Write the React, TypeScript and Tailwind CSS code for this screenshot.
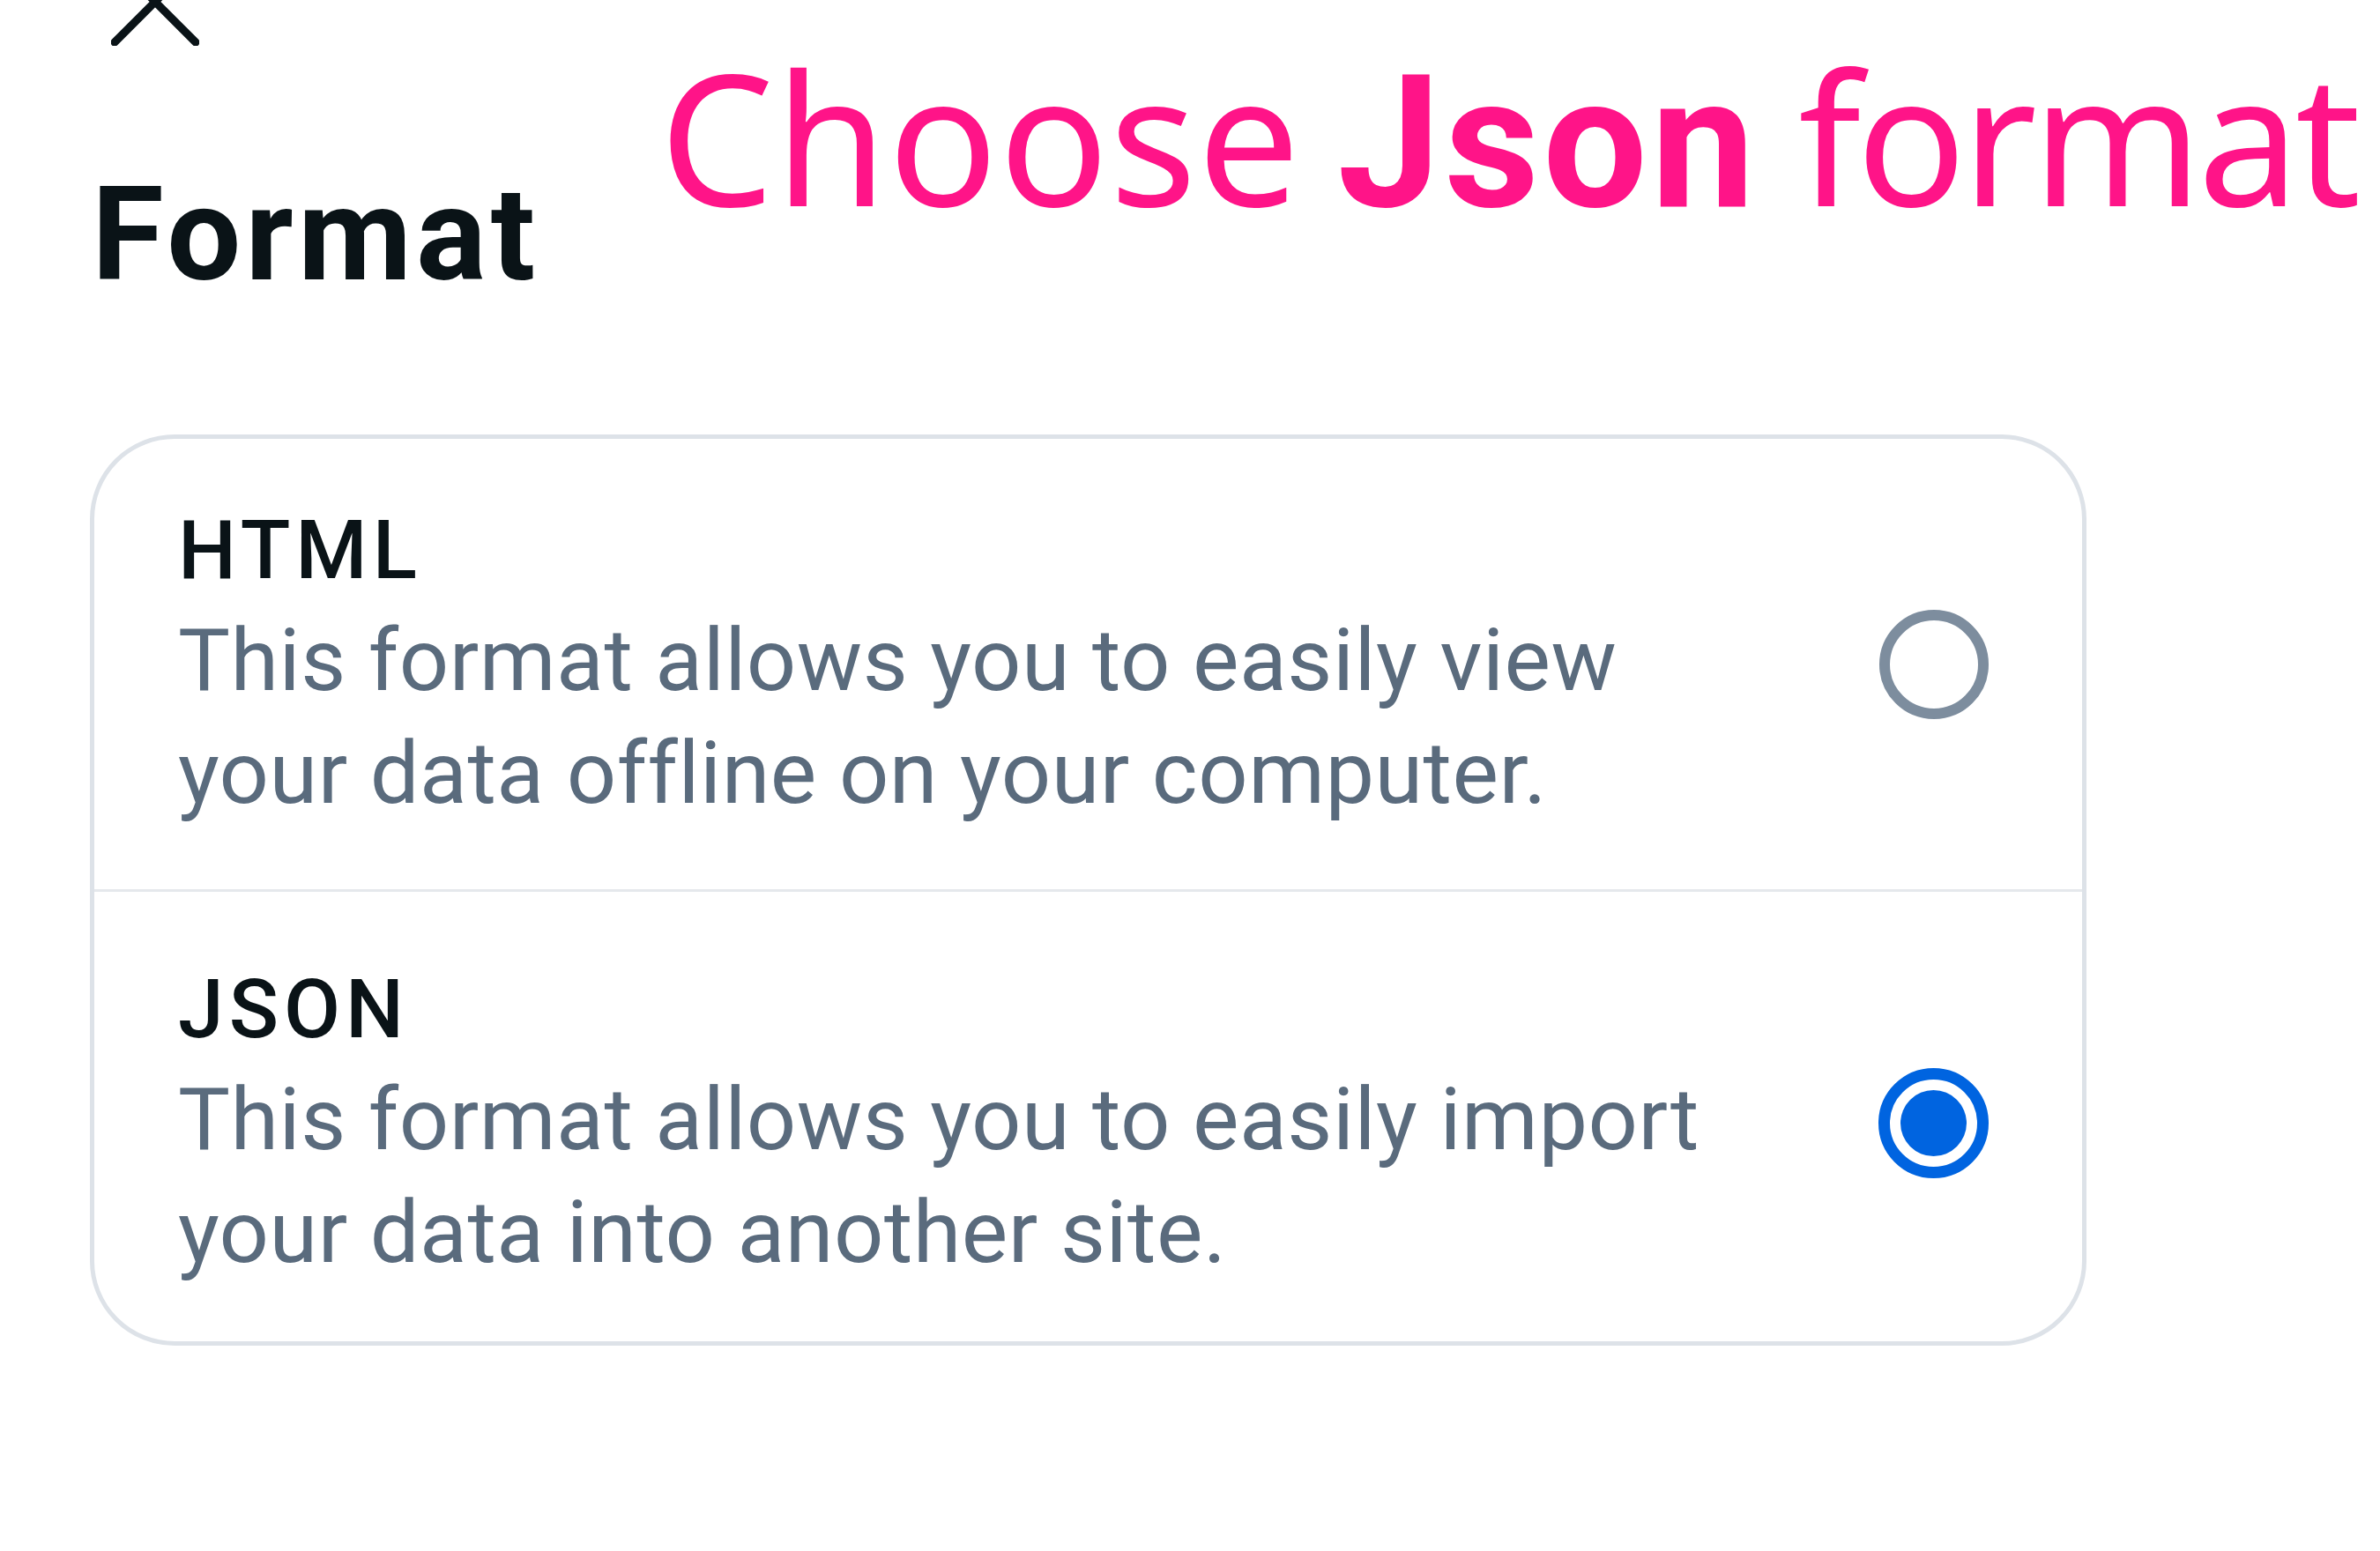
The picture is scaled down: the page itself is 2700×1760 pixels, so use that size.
import React from 'react'

type FormatOption = {
  id: string
  title: string
  lines: string[]
  selected: boolean
}

const OPTIONS: FormatOption[] = [
  {
    id: 'html',
    title: 'HTML',
    lines: ['This format allows you to easily view', 'your data offline on your computer.'],
    selected: false,
  },
  {
    id: 'json',
    title: 'JSON',
    lines: ['This format allows you to easily import', 'your data into another site.'],
    selected: true,
  },
]

function CloseIcon() {
  return (
    <svg
      viewBox="0 0 100 100"
      className="ml-[126px] -mt-[48px] h-[100px] w-[100px] shrink-0"
      fill="none"
      stroke="#0a1317"
      strokeWidth={9}
      strokeLinecap="round"
      aria-hidden
    >
      <path d="M4 4 L96 96" />
      <path d="M96 4 L4 96" />
    </svg>
  )
}

function Radio({ selected }: { selected: boolean }) {
  if (selected) {
    return (
      <div className="flex h-[125px] w-[125px] shrink-0 items-center justify-center rounded-full border-[13px] border-[#0064e0]">
        <div className="h-[75px] w-[75px] rounded-full bg-[#0064e0]" />
      </div>
    )
  }
  return <div className="h-[124px] w-[124px] shrink-0 rounded-full border-[12px] border-[#7d8d9e]" />
}

export default function App() {
  return (
    <div className="relative flex h-[1760px] w-[2700px] flex-col overflow-hidden bg-white font-[Roboto,sans-serif]">
      <CloseIcon />

      <h1 className="ml-[104px] mt-[140px] text-[149px] font-bold leading-[149px] tracking-[5px] text-[#0a1317]">
        Format
      </h1>

      {/* annotation over the screenshot */}
      <div className="absolute left-[748px] top-[51px] whitespace-nowrap font-['Noto_Sans',sans-serif] text-[206px] leading-[206px] text-[#ff1488]">
        <span className="tracking-[1px]">Choose</span>{' '}
        <span className="-ml-[12px] font-[Roboto,sans-serif] text-[210px] font-bold tracking-[4px]">Json</span>{' '}
        <span className="-ml-[8px] tracking-[-5px]">format</span>
      </div>

      <div className="ml-[102px] mt-[152px] w-[2265px] overflow-hidden rounded-[96px] border-[5px] border-[#dde2e8]">
        {OPTIONS.map((opt, i) => (
          <React.Fragment key={opt.id}>
            {i > 0 && <div className="h-[3px] bg-[#e5e8ec]" />}
            <div
              className={`flex items-center pl-[95px] pr-[106px] ${
                i === 0 ? 'pt-[68px] pb-[68px]' : 'pt-[75px] pb-[60px]'
              }`}
            >
              <div className="flex min-w-0 flex-1 flex-col">
                <div className="text-[93px] font-medium leading-[118px] tracking-[6px] text-[#0a1317]">
                  {opt.title}
                </div>
                <div className="mt-px text-[99px] leading-[128px] tracking-[0.5px] text-[#5a6b7d]">
                  {opt.lines.map((line) => (
                    <div key={line} className="whitespace-nowrap">
                      {line}
                    </div>
                  ))}
                </div>
              </div>
              <Radio selected={opt.selected} />
            </div>
          </React.Fragment>
        ))}
      </div>
    </div>
  )
}
